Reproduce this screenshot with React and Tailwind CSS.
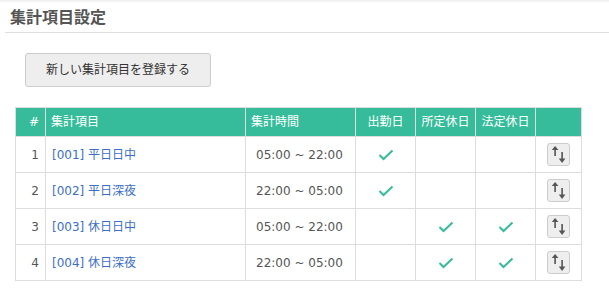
import React from 'react';

const FONT = { fontFamily: '"DejaVu Sans", "Noto Sans CJK JP", sans-serif' };

const rows = [
    { no: 1, code: '001', name: '平日日中', time: '05:00 ~ 22:00', work: true, sched: false, legal: false },
    { no: 2, code: '002', name: '平日深夜', time: '22:00 ~ 05:00', work: true, sched: false, legal: false },
    { no: 3, code: '003', name: '休日日中', time: '05:00 ~ 22:00', work: false, sched: true, legal: true },
    { no: 4, code: '004', name: '休日深夜', time: '22:00 ~ 05:00', work: false, sched: true, legal: true },
];

function Check() {
    return (
        <svg width="16" height="12" viewBox="0 0 16 12" className="mx-auto block">
            <polyline points="1.5,6 5.5,10 14.5,1.5" fill="none" stroke="#37bc9b" strokeWidth="2" />
        </svg>
    );
}

function SortButton() {
    return (
        <button className="mx-auto flex h-[23px] w-[23px] items-center justify-center rounded-[3px] border border-[#ccc] bg-[#eee]">
            <svg width="21" height="21" viewBox="0 0 21 21">
                <rect x="6.3" y="5" width="1.6" height="7" fill="#555" />
                <polygon points="3.8,6 7.1,2 10.4,6" fill="#555" />
                <rect x="13.3" y="8" width="1.6" height="8" fill="#555" />
                <polygon points="10.8,14.5 14.1,19 17.4,14.5" fill="#555" />
            </svg>
        </button>
    );
}

export default function App() {
    return (
        <div className="h-[301px] w-[609px] overflow-hidden bg-white text-[12px] text-[#555]" style={FONT}>
            <div className="h-[3px] bg-gradient-to-b from-[#ececec] to-white" />
            <div className="ml-[5px] flex h-[30px] items-center border-b border-[#ddd] pl-[5px] pb-[3px]">
                <h1 className="text-[16px] font-bold text-[#555]" style={{ fontFamily: '"Noto Sans CJK JP", sans-serif' }}>
                    集計項目設定
                </h1>
            </div>

            <div className="pl-[25px] pt-[20px]">
                <button className="h-[34px] w-[186px] rounded-[3px] border border-[#ccc] bg-[#eee] text-[12px] text-[#333]">
                    新しい集計項目を登録する
                </button>
            </div>

            <div className="pl-[15px] pt-[20px]">
                <table className="w-[566px] table-fixed border-collapse border border-[#ddd]">
                    <colgroup>
                        <col className="w-[30px]" />
                        <col className="w-[200px]" />
                        <col className="w-[110px]" />
                        <col className="w-[60px]" />
                        <col className="w-[60px]" />
                        <col className="w-[60px]" />
                        <col className="w-[46px]" />
                    </colgroup>
                    <thead>
                        <tr className="h-[29px] bg-[#37bc9b] text-white">
                            <th className="border border-[#ddd] pr-[6px] text-right font-normal">#</th>
                            <th className="border border-[#ddd] pl-[5px] text-left font-normal">集計項目</th>
                            <th className="border border-[#ddd] pl-[5px] text-left font-normal">集計時間</th>
                            <th className="border border-[#ddd] text-center font-normal">出勤日</th>
                            <th className="border border-[#ddd] text-center font-normal">所定休日</th>
                            <th className="border border-[#ddd] text-center font-normal">法定休日</th>
                            <th className="border border-[#ddd]"></th>
                        </tr>
                    </thead>
                    <tbody>
                        {rows.map((r) => (
                            <tr key={r.no} className="h-[36px]">
                                <td className="border border-[#ddd] pr-[6px] text-right">{r.no}</td>
                                <td className="border border-[#ddd] pl-[6px]">
                                    <a className="text-[#3c6fc4]">[{r.code}] {r.name}</a>
                                </td>
                                <td className="border border-[#ddd] pl-[10px]">{r.time}</td>
                                <td className="border border-[#ddd]">{r.work && <Check />}</td>
                                <td className="border border-[#ddd]">{r.sched && <Check />}</td>
                                <td className="border border-[#ddd]">{r.legal && <Check />}</td>
                                <td className="border border-[#ddd]">
                                    <SortButton />
                                </td>
                            </tr>
                        ))}
                    </tbody>
                </table>
            </div>
        </div>
    );
}
